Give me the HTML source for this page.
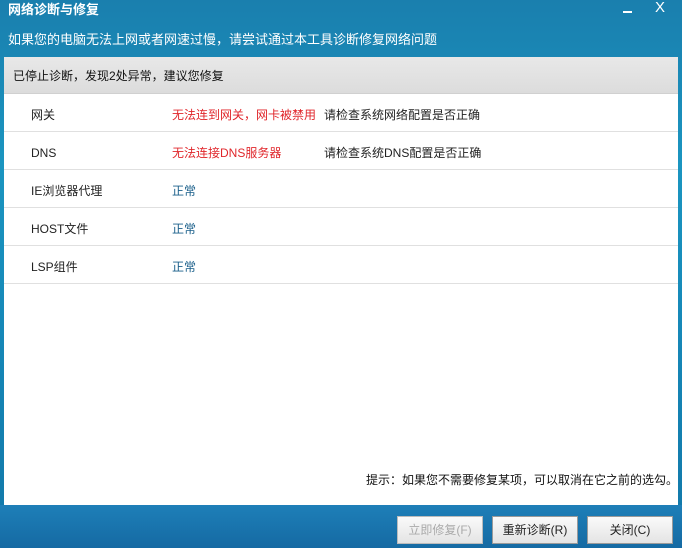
<!DOCTYPE html>
<html><head><meta charset="utf-8"><style>
*{margin:0;padding:0;box-sizing:border-box}
body{width:682px;height:548px;overflow:hidden;position:relative;font-family:"Liberation Sans","Noto Sans CJK SC",sans-serif;font-size:12px;
background:linear-gradient(180deg,#1a7fae 0%,#1b95c0 30%,#1688b8 60%,#1277a8 100%)}
.t{position:absolute;color:#fff;line-height:16px}
.panel{position:absolute;left:4px;top:57px;width:674px;height:448px;background:#fff}
.hd{height:37px;background:linear-gradient(#e8e8e8,#dcdcdc);border-bottom:1px solid #d0d0d0;padding:11px 9px;color:#111;line-height:16px}
.row{height:38px;border-bottom:1px solid #e0e0e0;position:relative;color:#222}
.row span{position:absolute;top:13px;line-height:16px;display:block;height:16px}
.red{color:#e0262b}.blue{color:#1a5f8a}
.bot{position:absolute;left:0;top:505px;width:682px;height:43px;background:linear-gradient(#1e7fb8,#156aa3)}
.btn{position:absolute;top:516px;width:86px;height:28px;border:1px solid #9a9a9a;background:linear-gradient(#fafafa,#e4e4e4);text-align:center;line-height:26px;color:#222}
</style></head><body>
<div class="t" style="left:8px;top:2px;font-size:13px;font-weight:bold">网络诊断与修复</div>
<div style="position:absolute;left:623px;top:11px;width:9px;height:2px;background:#fff"></div>
<div class="t" style="left:655px;top:0px;font-size:15px">X</div>
<div class="t" style="left:8px;top:32px;font-size:13px">如果您的电脑无法上网或者网速过慢，请尝试通过本工具诊断修复网络问题</div>
<div class="panel">
<div class="hd">已停止诊断，发现2处异常，建议您修复</div>
<div class="row"><span style="left:27px">网关</span><span class="red" style="left:168px">无法连到网关，网卡被禁用</span><span style="left:320px">请检查系统网络配置是否正确</span></div>
<div class="row"><span style="left:27px">DNS</span><span class="red" style="left:168px">无法连接DNS服务器</span><span style="left:320px">请检查系统DNS配置是否正确</span></div>
<div class="row"><span style="left:27px">IE浏览器代理</span><span class="blue" style="left:168px">正常</span></div>
<div class="row"><span style="left:27px">HOST文件</span><span class="blue" style="left:168px">正常</span></div>
<div class="row"><span style="left:27px">LSP组件</span><span class="blue" style="left:168px">正常</span></div>
<div style="position:absolute;left:362px;top:414px;color:#111">提示：如果您不需要修复某项，可以取消在它之前的选勾。</div>
</div>
<div class="bot"></div>
<div class="btn" style="left:397px;color:#aaa;border-color:#bbb">立即修复(F)</div>
<div class="btn" style="left:492px">重新诊断(R)</div>
<div class="btn" style="left:587px">关闭(C)</div>
</body></html>
